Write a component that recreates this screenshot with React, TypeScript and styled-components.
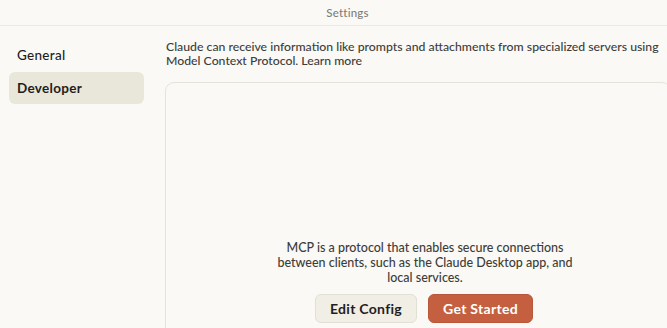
import React from "react";
import styled, { createGlobalStyle } from "styled-components";

const Global = createGlobalStyle`
  html, body { margin: 0; padding: 0; background: #faf9f5; overflow: hidden; }
  body { font-family: "Lato", "Open Sans", sans-serif; color: #3d3d3a; }
  #root { width: 667px; height: 328px; }
`;

const Window = styled.div`
  width: 667px;
  height: 328px;
  display: flex;
  flex-direction: column;
  background: #faf9f5;
  overflow: hidden;
`;

const TitleBar = styled.div`
  height: 25px;
  flex-shrink: 0;
  display: flex;
  align-items: center;
  justify-content: center;
  padding-left: 28px;
  border-bottom: 1px solid #ebe9e2;
  font-size: 11.5px;
  color: #7f7e7a;
  font-weight: 500;
  letter-spacing: 0.2px;
`;

const Body = styled.div`
  flex: 1;
  display: flex;
  min-height: 0;
`;

const Sidebar = styled.nav`
  width: 135px;
  flex-shrink: 0;
  padding: 13px 0 0 9px;
  display: flex;
  flex-direction: column;
  gap: 1px;
`;

const NavItem = styled.div<{ $active?: boolean }>`
  height: 32px;
  display: flex;
  align-items: center;
  padding-left: 8px;
  border-radius: 6px;
  font-size: 13.5px;
  letter-spacing: 0.3px;
  color: #1f1e1d;
  font-weight: ${(p) => (p.$active ? 700 : 500)};
  background: ${(p) => (p.$active ? "#e9e6da" : "transparent")};
`;

const Main = styled.main`
  flex: 1;
  padding: 14px 0 0 21px;
  display: flex;
  flex-direction: column;
  gap: 14px;
  min-width: 0;
`;

const Intro = styled.p`
  margin: 0 0 0 1px;
  font-size: 12.25px;
  line-height: 14px;
  letter-spacing: 0;
  color: #3d3d3a;
  font-weight: 500;
  white-space: nowrap;
`;

const Card = styled.section`
  height: 260px;
  flex-shrink: 0;
  width: calc(100% + 4px);
  box-sizing: border-box;
  border: 1px solid #e6e3db;
  border-radius: 9px;
  display: flex;
  flex-direction: column;
  align-items: center;
  justify-content: flex-end;
  padding-bottom: 18px;
  gap: 9px;
`;

const Blurb = styled.p`
  margin: 0;
  width: 300px;
  text-align: center;
  font-size: 12.5px;
  line-height: 15px;
  letter-spacing: 0;
  color: #3d3d3a;
  font-weight: 500;
  padding-left: 14px;
`;

const Actions = styled.div`
  display: flex;
  gap: 11px;
  padding-left: 12px;
`;

const Button = styled.button<{ $primary?: boolean }>`
  height: 29px;
  padding: 0 12px;
  border-radius: 6px;
  font-family: inherit;
  font-size: 14px;
  font-weight: 700;
  letter-spacing: 0.3px;
  cursor: pointer;
  border: 1px solid ${(p) => (p.$primary ? "#b9573a" : "#e2dfd5")};
  background: ${(p) => (p.$primary ? "#c4603f" : "#f1eee6")};
  color: ${(p) => (p.$primary ? "#ffffff" : "#1f1e1d")};
  min-width: ${(p) => (p.$primary ? "105px" : "102px")};
`;

export default function App() {
  return (
    <>
      <Global />
      <Window>
        <TitleBar>Settings</TitleBar>
        <Body>
          <Sidebar>
            <NavItem>General</NavItem>
            <NavItem $active>Developer</NavItem>
          </Sidebar>
          <Main>
            <Intro>
              Claude can receive information like prompts and attachments from specialized servers using
              <br />
              Model Context Protocol. Learn more
            </Intro>
            <Card>
              <Blurb>
                MCP is a protocol that enables secure connections between clients, such as the Claude Desktop app, and local services.
              </Blurb>
              <Actions>
                <Button>Edit Config</Button>
                <Button $primary>Get Started</Button>
              </Actions>
            </Card>
          </Main>
        </Body>
      </Window>
    </>
  );
}
